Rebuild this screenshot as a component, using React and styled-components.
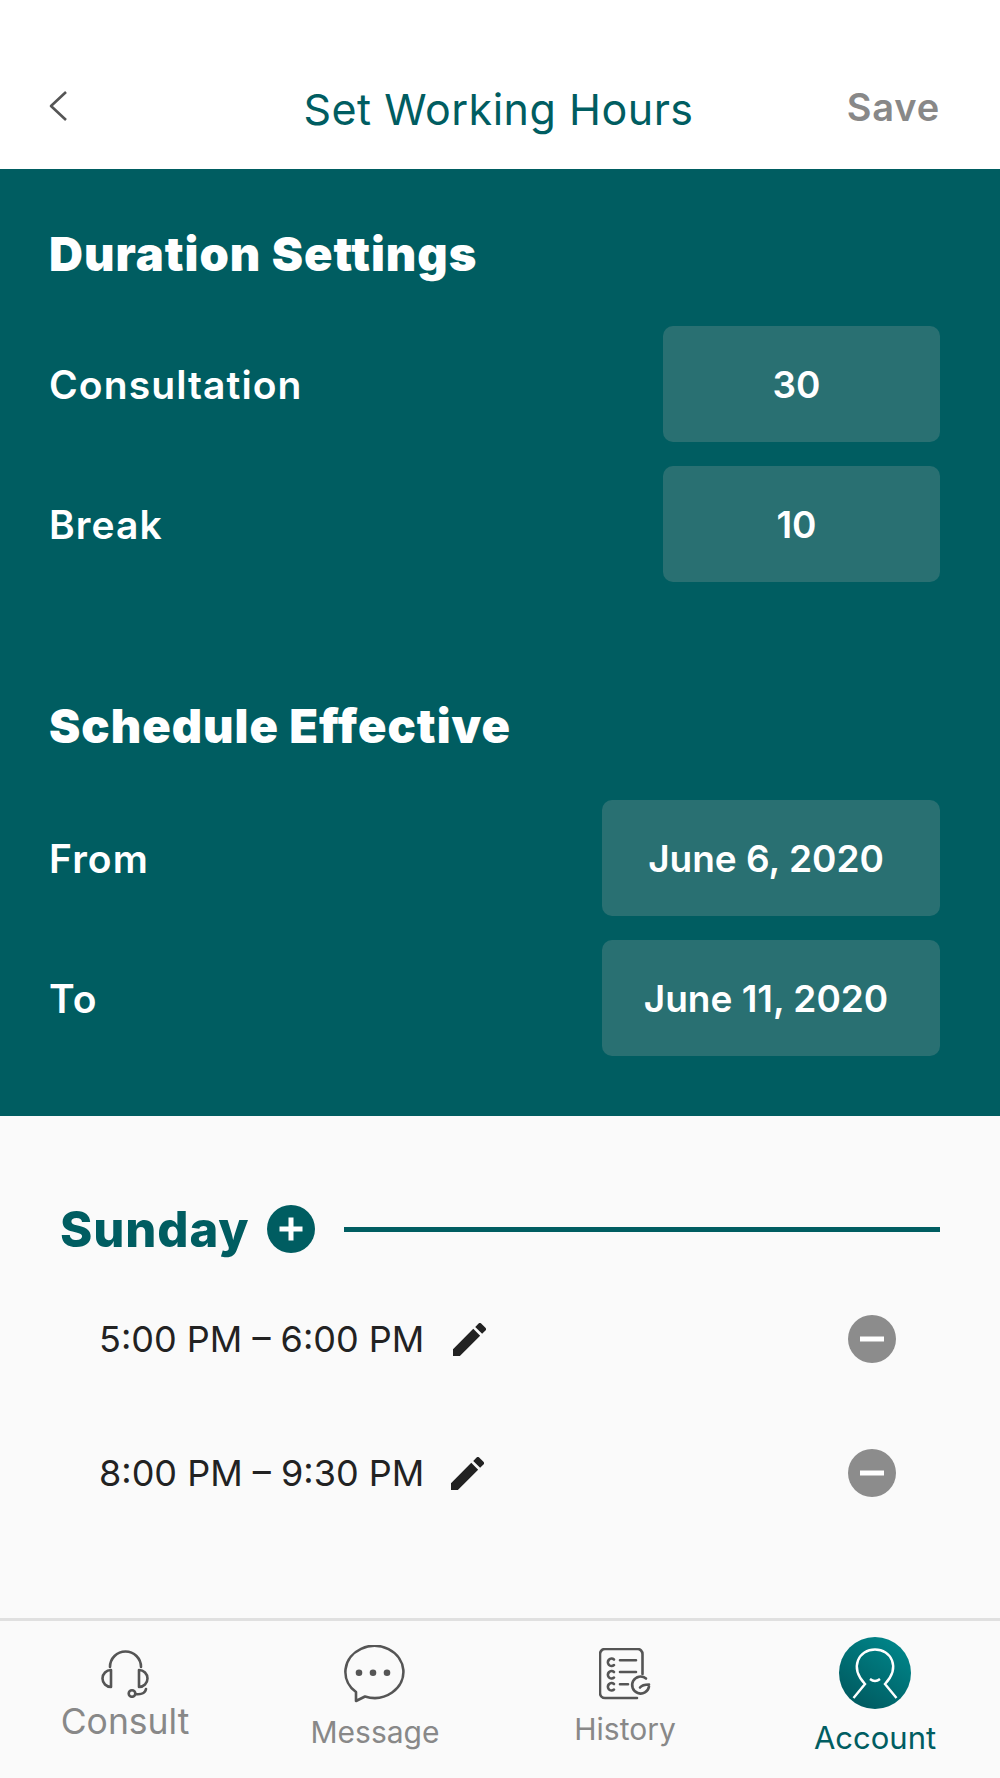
import styled, { createGlobalStyle } from 'styled-components';

const GlobalStyle = createGlobalStyle`
  html, body {
    margin: 0;
    padding: 0;
    background: #fafafa;
  }
  * {
    box-sizing: border-box;
  }
`;

const Screen = styled.div`
  width: 1000px;
  height: 1778px;
  display: flex;
  flex-direction: column;
  font-family: Inter, "Liberation Sans", sans-serif;
  overflow: hidden;
`;

const Header = styled.header`
  height: 169px;
  background: #fff;
  padding: 62px 60px 0 49px;
  display: grid;
  grid-template-columns: 1fr auto 1fr;
  align-items: start;
`;

const BackButton = styled.button`
  justify-self: start;
  margin-top: 29px;
  padding: 0;
  border: none;
  background: none;
  display: flex;
`;

const Title = styled.h1`
  margin: 18px 0 0 8px;
  font-size: 43px;
  line-height: 58px;
  font-weight: 400;
  color: #005d61;
  letter-spacing: 0.5px;
`;

const SaveButton = styled.button`
  justify-self: end;
  margin-top: 21px;
  padding: 0;
  border: none;
  background: none;
  font-family: inherit;
  font-size: 38px;
  line-height: 48px;
  font-weight: 600;
  letter-spacing: 0.8px;
  color: #888;
`;

const Panel = styled.section`
  height: 947px;
  background: #005d61;
  padding: 55px 60px 0 49px;
  color: #fff;
`;

const PanelHeading = styled.h2`
  margin: ${(p) => (p.$next ? '114px' : '0')} 0 ${(p) => (p.$next ? '44px' : '42px')};
  font-size: 47px;
  line-height: 60px;
  font-weight: 900;
  letter-spacing: 1px;
`;

const SettingRow = styled.div`
  display: flex;
  justify-content: space-between;
  align-items: center;
  margin-bottom: 24px;
`;

const SettingLabel = styled.span`
  font-size: 39px;
  font-weight: 600;
  letter-spacing: 1.1px;
`;

const ValueBox = styled.div`
  width: ${(p) => (p.$wide ? '338px' : '277px')};
  height: 116px;
  padding-right: 10px;
  border-radius: 10px;
  background: #297072;
  display: flex;
  align-items: center;
  justify-content: center;
  font-size: 37px;
  font-weight: 600;
`;

const Schedule = styled.section`
  flex: 1;
  background: #fafafa;
  padding: 88px 60px 0 60px;
`;

const DayHeader = styled.div`
  display: flex;
  align-items: center;
  height: 50px;
`;

const DayName = styled.h3`
  margin: 0;
  font-size: 49px;
  font-weight: 800;
  letter-spacing: 0.9px;
  color: #005d61;
`;

const AddIcon = styled.svg`
  width: 48px;
  height: 48px;
  margin-left: 18px;
  flex: none;
`;

const DayRule = styled.div`
  flex: 1;
  height: 5px;
  margin-left: 29px;
  background: #005d61;
`;

const Slots = styled.div`
  margin-top: 61px;
  padding: 0 44px 0 39px;
  display: flex;
  flex-direction: column;
  gap: 86px;
`;

const Slot = styled.div`
  height: 48px;
  display: flex;
  align-items: center;
`;

const SlotTime = styled.span`
  font-size: 36px;
  font-weight: 400;
  color: #222;
`;

const EditIcon = styled.svg`
  width: 33px;
  height: 33px;
  margin-left: ${(p) => p.$gap}px;
  fill: #222;
`;

const RemoveIcon = styled.svg`
  width: 48px;
  height: 48px;
  margin-left: auto;
`;

const Nav = styled.nav`
  height: 160px;
  border-top: 3px solid #e0e0e0;
  background: #fafafa;
  display: grid;
  grid-template-columns: repeat(4, 250px);
`;

const NavItem = styled.div`
  display: flex;
  flex-direction: column;
  align-items: center;
  padding-top: ${(p) => p.$top}px;
  font-size: ${(p) => p.$size}px;
  line-height: 40px;
  color: ${(p) => (p.$active ? '#005d61' : '#888')};
`;

const NavLabel = styled.span`
  margin-top: ${(p) => p.$gap}px;
`;

const Glyph = styled.svg`
  display: block;
  flex: none;
  fill: none;
  stroke: #555;
  stroke-width: 2.6;
  stroke-linecap: round;
  stroke-linejoin: round;
`;

const slots = [
  { id: 1, time: '5:00 PM – 6:00 PM', gap: 29 },
  { id: 2, time: '8:00 PM – 9:30 PM', gap: 27 },
];

const PencilIcon = ({ gap }) => (
  <EditIcon $gap={gap} viewBox="3 3 18 18">
    <path d="M3 17.25V21h3.75L17.81 9.94l-3.75-3.75L3 17.25zM20.71 7.04a1 1 0 0 0 0-1.41l-2.34-2.34a1 1 0 0 0-1.41 0l-1.83 1.83 3.75 3.75 1.83-1.83z" />
  </EditIcon>
);

const App = () => (
  <Screen>
    <GlobalStyle />
    <Header>
      <BackButton aria-label="Back">
        <Glyph width="18" height="30" viewBox="0 0 18 30">
          <path d="M17 1 2 15l15 14" strokeLinecap="butt" />
        </Glyph>
      </BackButton>
      <Title>Set Working Hours</Title>
      <SaveButton>Save</SaveButton>
    </Header>

    <Panel>
      <PanelHeading>Duration Settings</PanelHeading>
      <SettingRow>
        <SettingLabel>Consultation</SettingLabel>
        <ValueBox>30</ValueBox>
      </SettingRow>
      <SettingRow>
        <SettingLabel>Break</SettingLabel>
        <ValueBox>10</ValueBox>
      </SettingRow>

      <PanelHeading $next>Schedule Effective</PanelHeading>
      <SettingRow>
        <SettingLabel>From</SettingLabel>
        <ValueBox $wide>June 6, 2020</ValueBox>
      </SettingRow>
      <SettingRow>
        <SettingLabel>To</SettingLabel>
        <ValueBox $wide>June 11, 2020</ValueBox>
      </SettingRow>
    </Panel>

    <Schedule>
      <DayHeader>
        <DayName>Sunday</DayName>
        <AddIcon viewBox="0 0 48 48">
          <circle cx="24" cy="24" r="24" fill="#005d61" />
          <path d="M24 12.500v23M12.500 24h23" stroke="#fff" strokeWidth="5" />
        </AddIcon>
        <DayRule />
      </DayHeader>
      <Slots>
        {slots.map((slot) => (
          <Slot key={slot.id}>
            <SlotTime>{slot.time}</SlotTime>
            <PencilIcon gap={slot.gap} />
            <RemoveIcon viewBox="0 0 48 48">
              <circle cx="24" cy="24" r="24" fill="#8c8c8c" />
              <path d="M12 24h24" stroke="#fff" strokeWidth="5" />
            </RemoveIcon>
          </Slot>
        ))}
      </Slots>
    </Schedule>

    <Nav>
      <NavItem $top={29} $size={35.5}>
        <Glyph width="48" height="48" viewBox="0 0 48 48">
          <path d="M9 17A15.500 15.500 0 0 1 40 17" />
          <path d="M10 20A8.500 8.500 0 0 0 10 37Z" />
          <path d="M38 20A8.500 8.500 0 0 1 38 37Z" />
          <circle cx="31" cy="43.5" r="3.3" />
          <path d="M34.500 44C38 44.500 44 44 45 39" />
        </Glyph>
        <NavLabel $gap={4}>Consult</NavLabel>
      </NavItem>
      <NavItem $top={24} $size={30}>
        <Glyph width="62" height="58" viewBox="2 0 62 58">
          <path d="M14 47A29 26 0 1 1 23 51.500L14 56Z" />
          <circle cx="17" cy="27.7" r="3.3" fill="#555" stroke="none" />
          <circle cx="31" cy="27.7" r="3.3" fill="#555" stroke="none" />
          <circle cx="45" cy="27.7" r="3.3" fill="#555" stroke="none" />
        </Glyph>
        <NavLabel $gap={9}>Message</NavLabel>
      </NavItem>
      <NavItem $top={27} $size={30}>
        <Glyph width="52" height="52" viewBox="0 0 52 52">
          <path d="M43.500 26V6a5 5 0 0 0-5-5H6a5 5 0 0 0-5 5v39a5 5 0 0 0 5 5h32" />
          <path d="M15 11.500a3.700 3.700 0 1 0 0 5.600M15 24a3.700 3.700 0 1 0 0 5.600M15 36a3.700 3.700 0 1 0 0 5.600" />
          <path d="M21 12.300h16M21 24h16M21 36.300h8" />
          <path d="M47 30.500a8.500 8.500 0 1 0 3 8M41 39.500c2-2.500 5-3 9-3" />
        </Glyph>
        <NavLabel $gap={9}>History</NavLabel>
      </NavItem>
      <NavItem $top={16} $size={31} $active>
        <svg width="72" height="72" viewBox="0 0 72 72">
          <defs>
            <linearGradient id="accountFill" x1="0.2" y1="1" x2="0.85" y2="0.05">
              <stop offset="0" stopColor="#00585e" />
              <stop offset="1" stopColor="#00868a" />
            </linearGradient>
          </defs>
          <circle cx="36" cy="36" r="36" fill="url(#accountFill)" />
          <path
            d="M14.500 61 26 47C10 30 20 12.500 36 12.500S62 30 46 47L57.500 61"
            fill="none"
            stroke="#fff"
            strokeWidth="2.4"
          />
          <path d="M31 42Q36 46 41 42" fill="none" stroke="#fff" strokeWidth="2.4" />
        </svg>
        <NavLabel $gap={9}>Account</NavLabel>
      </NavItem>
    </Nav>
  </Screen>
);

export default App;
